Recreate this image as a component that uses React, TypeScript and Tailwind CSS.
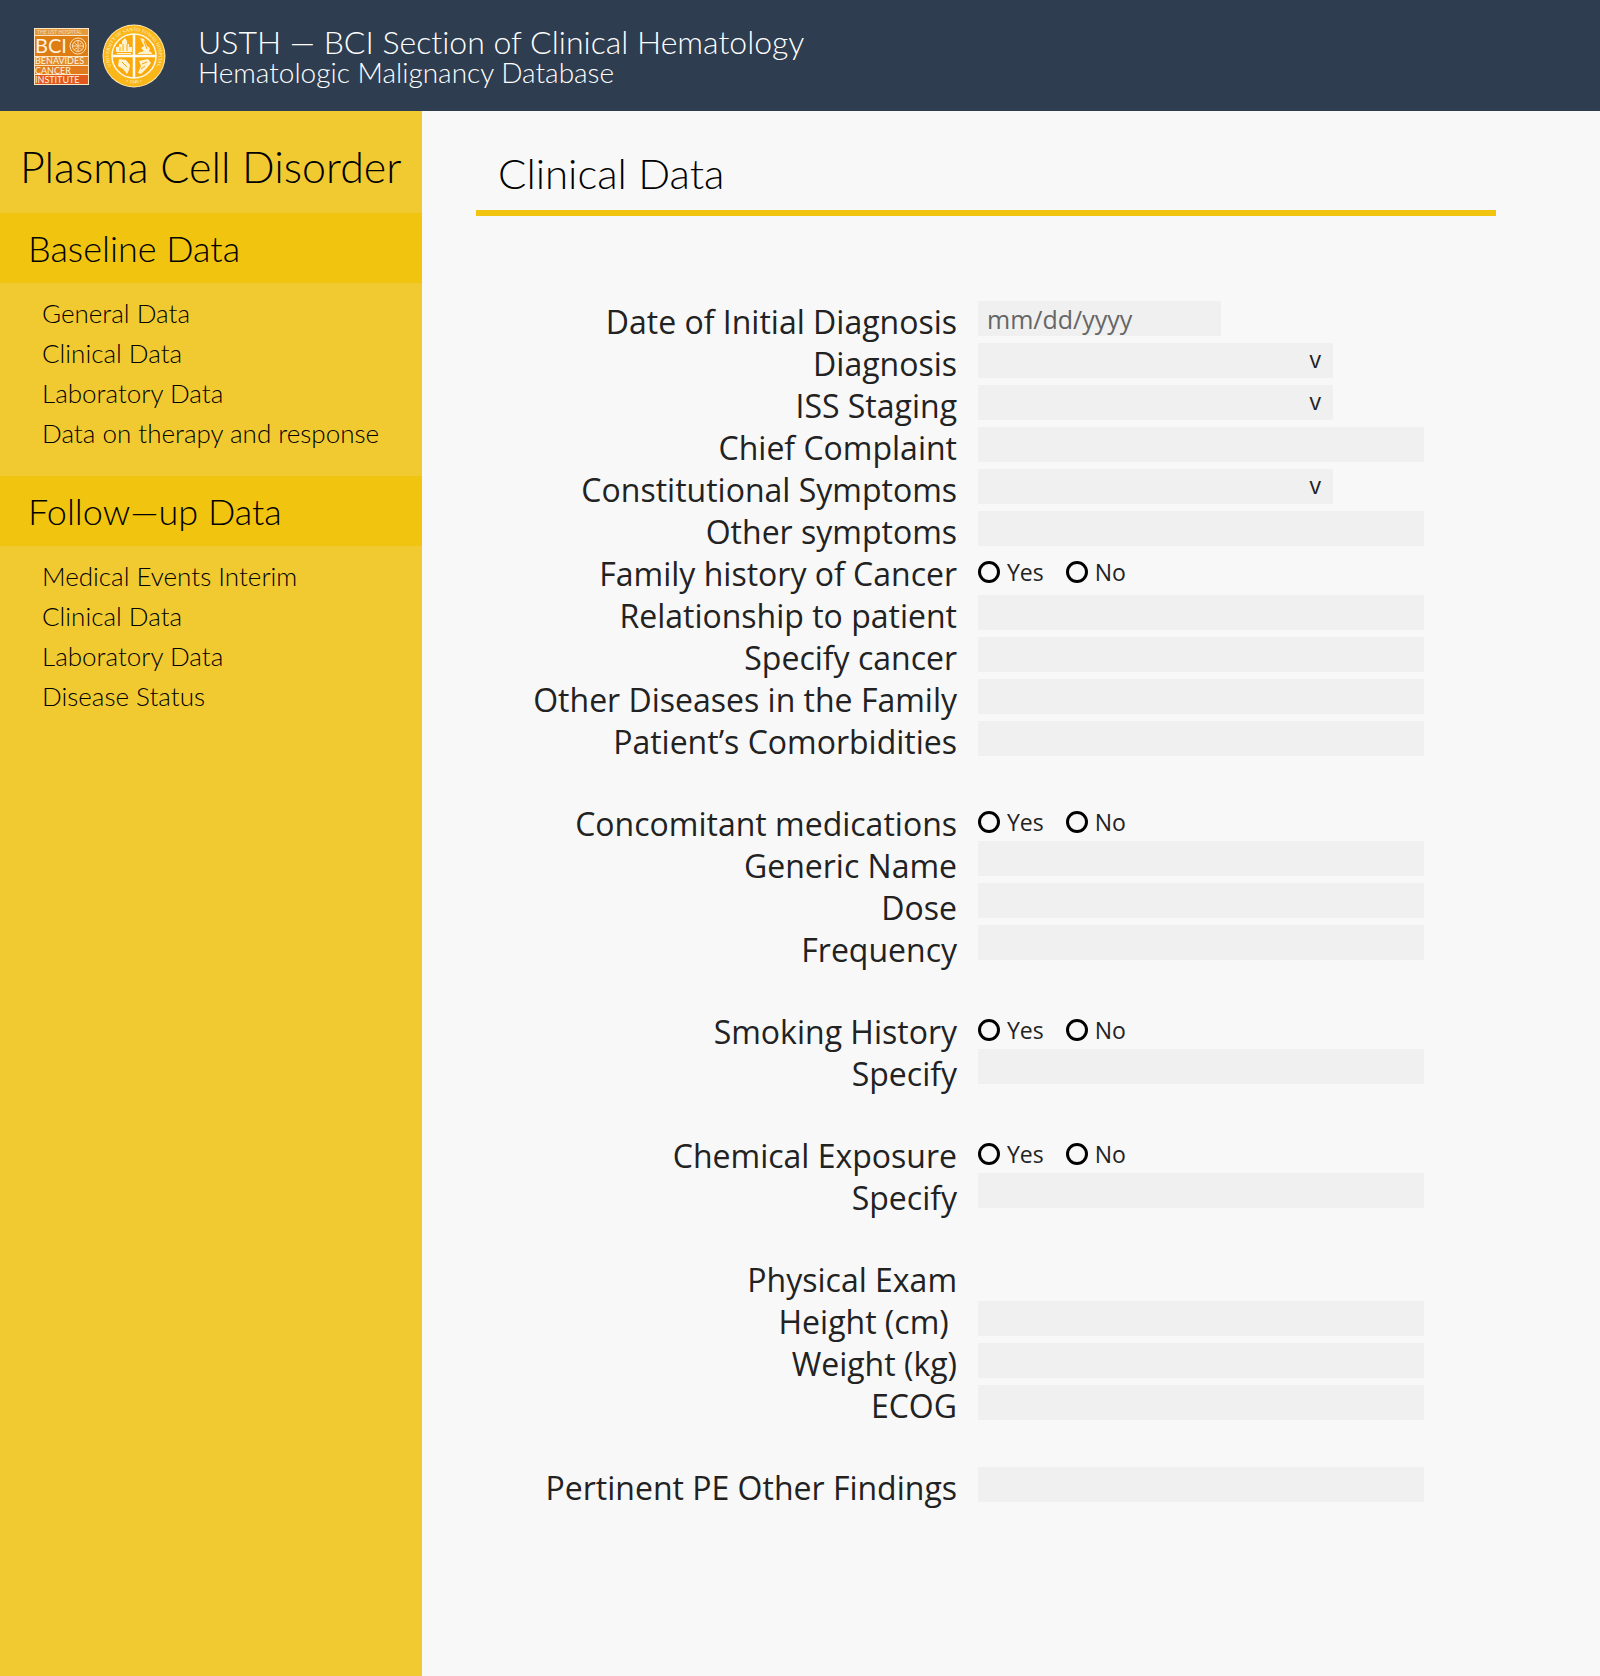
import { useId } from "react";

type Field = {
  label: string;
  kind: "date" | "select" | "text" | "radio" | "none";
};

type Group = { raised?: boolean; fields: Field[] };

const groups: Group[] = [
  {
    fields: [
      { label: "Date of Initial Diagnosis", kind: "date" },
      { label: "Diagnosis", kind: "select" },
      { label: "ISS Staging", kind: "select" },
      { label: "Chief Complaint", kind: "text" },
      { label: "Constitutional Symptoms", kind: "select" },
      { label: "Other symptoms", kind: "text" },
      { label: "Family history of Cancer", kind: "radio" },
      { label: "Relationship to patient", kind: "text" },
      { label: "Specify cancer", kind: "text" },
      { label: "Other Diseases in the Family", kind: "text" },
      { label: "Patient’s Comorbidities", kind: "text" },
    ],
  },
  {
    raised: true,
    fields: [
      { label: "Concomitant medications", kind: "radio" },
      { label: "Generic Name", kind: "text" },
      { label: "Dose", kind: "text" },
      { label: "Frequency", kind: "text" },
    ],
  },
  {
    raised: true,
    fields: [
      { label: "Smoking History", kind: "radio" },
      { label: "Specify", kind: "text" },
    ],
  },
  {
    raised: true,
    fields: [
      { label: "Chemical Exposure", kind: "radio" },
      { label: "Specify", kind: "text" },
    ],
  },
  {
    fields: [
      { label: "Physical Exam", kind: "none" },
      { label: "Height (cm)\u00a0", kind: "text" },
      { label: "Weight (kg)", kind: "text" },
      { label: "ECOG", kind: "text" },
    ],
  },
  { fields: [{ label: "Pertinent PE Other Findings", kind: "text" }] },
];

const menu = [
  {
    title: "Baseline Data",
    items: ["General Data", "Clinical Data", "Laboratory Data", "Data on therapy and response"],
  },
  {
    title: "Follow—up Data",
    items: ["Medical Events Interim", "Clinical Data", "Laboratory Data", "Disease Status"],
  },
];

function BciLogo() {
  return (
    <svg width="55" height="57" viewBox="0 0 55 57" role="img" aria-label="Benavides Cancer Institute" className="shrink-0">
      <rect width="55" height="57" fill="#fbe6c4" />
      <rect x="1" y="1" width="53" height="6" fill="#e39a3c" />
      <rect x="1" y="8" width="53" height="20" fill="#dd7d12" />
      <rect x="1" y="29" width="53" height="8" fill="#e08a2c" />
      <rect x="1" y="38" width="53" height="8" fill="#e17a1c" />
      <rect x="1" y="47" width="53" height="9" fill="#e2591f" />
      <g fill="#fdf3e2" fontFamily="Lato, sans-serif">
        <text x="3" y="6" fontSize="5" opacity="0.7">THE UST HOSPITAL</text>
        <text x="1" y="25" fontSize="20">BCI</text>
        <text x="1" y="36" fontSize="9">BENAVIDES</text>
        <text x="1" y="46" fontSize="9">CANCER</text>
        <text x="1" y="55" fontSize="9">INSTITUTE</text>
      </g>
      <g fill="none" stroke="#fbe0b4" strokeWidth="1">
        <circle cx="44" cy="18" r="8" />
        <circle cx="44" cy="18" r="5.5" />
        <path d="M44 12.500v11M38.500 18h11M40.500 15l2.500 2M47.500 15l-2 1.500M40.500 21.500l2.500-1.500M47 21.500l-2-2" />
      </g>
    </svg>
  );
}

function HospitalSeal() {
  return (
    <svg width="64" height="64" viewBox="0 0 64 64" role="img" aria-label="University of Santo Tomas Hospital, 1946" className="shrink-0">
      <defs>
        <path id="seal-top" d="M14 49.500A25 25 0 1 1 50 49.500" />
        <path id="seal-bottom" d="M18 55.500Q32 63.500 46 55.500" />
      </defs>
      <circle cx="32" cy="32" r="31.500" fill="#fbe9b0" />
      <circle cx="32" cy="32" r="30.500" fill="#fbb61a" />
      <circle cx="32" cy="32" r="22" fill="#fba90c" stroke="#fff8e0" strokeWidth="1.500" />
      <g fill="#fff3cf" fontFamily="'Liberation Serif', serif" fontSize="5">
        <text textAnchor="middle">
          <textPath href="#seal-top" startOffset="50%">UNIVERSITY OF SANTO TOMAS HOSPITAL</textPath>
        </text>
        <text textAnchor="middle">
          <textPath href="#seal-bottom" startOffset="50%">• 1946 •</textPath>
        </text>
      </g>
      <path d="M32 10.500v43M10.500 32h43" stroke="#fffdf3" strokeWidth="2.500" />
      <g fill="#fff3cf">
        <path d="M14 28v-5h3v-3h3v-3l3-3 2 3v3h2v3h3v5zM15 29h14v1H15z" />
        <path d="M38 14l4 1 3 7 3 2-1 3 3 2v1H36v-1l6-2-3-3 3-2z" />
        <path d="M17 35l7 1 4 5-1 5-2 4-4-5-5-3z" />
        <path d="M37 37l9-2 3 4-4 5-6 6-3-1 3-7z" />
      </g>
      <g fill="none" stroke="#f9a60a" strokeWidth="1">
        <path d="M18 23v4M21 20v7M25 20v7M42 17l3 8M20 38l5 5M40 40l5-2M39 45l4-3" />
      </g>
    </svg>
  );
}

function Radio({ name, text }: { name: string; text: string }) {
  return (
    <label className="flex items-center gap-[7px] text-[23px] leading-[38px]">
      <input
        type="radio"
        name={name}
        className="size-[22px] appearance-none rounded-full border-[3px] border-black checked:bg-black checked:bg-clip-content checked:p-[3px]"
      />
      {text}
    </label>
  );
}

function Control({ id, field, raised }: { id: string; field: Field; raised?: boolean }) {
  if (field.kind === "none") return <div />;
  if (field.kind === "radio") {
    return (
      <div role="radiogroup" aria-labelledby={`${id}-label`} className="flex items-start gap-[22px]">
        <Radio name={id} text="Yes" />
        <Radio name={id} text="No" />
      </div>
    );
  }
  if (field.kind === "date") {
    return (
      <input
        id={id}
        type="text"
        placeholder="mm/dd/yyyy"
        className="block h-[35px] w-[243px] bg-[#f0f0f0] px-[9px] text-[25px] leading-8 placeholder:text-[#666]"
      />
    );
  }
  if (field.kind === "select") {
    return (
      <div className="relative h-[35px] w-full max-w-[355px]">
        <select id={id} className="block size-full appearance-none bg-[#f0f0f0] pr-10 pl-[9px] text-[23px]">
          <option value=""></option>
        </select>
        <span aria-hidden="true" className="pointer-events-none absolute top-0 right-3 text-[23px] leading-8">
          v
        </span>
      </div>
    );
  }
  return (
    <input
      id={id}
      type="text"
      className={
        raised
          ? "-mt-1 block h-[35px] w-full max-w-[446px] bg-[#f0f0f0] px-[9px] text-[23px]"
          : "block h-[35px] w-full max-w-[446px] bg-[#f0f0f0] px-[9px] text-[23px]"
      }
    />
  );
}

function Row({ field, raised }: { field: Field; raised?: boolean }) {
  const id = useId();
  const labelClass = "text-right text-[32px] leading-[42px] whitespace-nowrap";
  return (
    <div className="grid min-h-[42px] grid-cols-[minmax(0,1fr)_518px] gap-x-[21px]">
      {field.kind === "radio" || field.kind === "none" ? (
        <span id={`${id}-label`} className={labelClass}>
          {field.label}
        </span>
      ) : (
        <label htmlFor={id} className={labelClass}>
          {field.label}
        </label>
      )}
      <Control id={id} field={field} raised={raised} />
    </div>
  );
}

export default function App() {
  return (
    <div className="flex min-h-screen flex-col bg-[#f8f8f8] font-['Open_Sans',sans-serif] text-[#222]">
      <header className="flex items-start bg-[#2e3d50] pt-6 pb-[23px] pl-[34px] text-white">
        <div className="flex items-center gap-[13px]">
          <BciLogo />
          <HospitalSeal />
        </div>
        <div className="ml-8 font-['Lato',sans-serif] font-light [font-variant-ligatures:none]">
          <p className="text-[32px] leading-9">USTH — BCI Section of Clinical Hematology</p>
          <p className="text-[28px] leading-6">Hematologic Malignancy Database</p>
        </div>
      </header>

      <div className="flex grow">
        <aside className="w-[422px] shrink-0 bg-[#f1ca32] font-['Lato',sans-serif] font-light text-black [font-variant-ligatures:none]">
          <h1 className="pt-8 pb-[22px] pl-5 text-[43px] leading-[48px] whitespace-nowrap">Plasma Cell Disorder</h1>
          <nav>
            {menu.map((section) => (
              <section key={section.title}>
                <h2 className="bg-[#f1c40f] pl-7 text-[36px] leading-[70px]">{section.title}</h2>
                <ul className="pt-[10px] pb-[23px] pl-[42px]">
                  {section.items.map((item) => (
                    <li key={item}>
                      <a href="#" className="block text-[26px] leading-10 whitespace-nowrap">
                        {item}
                      </a>
                    </li>
                  ))}
                </ul>
              </section>
            ))}
          </nav>
        </aside>

        <main className="min-w-0 grow pt-[38px] pr-[104px] pb-16 pl-[54px]">
          <h2 className="border-b-[6px] border-[#f1c40f] pb-[13px] pl-[22px] font-['Lato',sans-serif] text-[42px] leading-[48px] font-light">
            <span className="text-black">Clinical Data</span>
          </h2>
          <form className="mt-[85px] flex flex-col gap-10">
            {groups.map((group, g) => (
              <div key={g}>
                {group.fields.map((field, f) => (
                  <Row key={f} field={field} raised={group.raised} />
                ))}
              </div>
            ))}
          </form>
        </main>
      </div>
    </div>
  );
}
